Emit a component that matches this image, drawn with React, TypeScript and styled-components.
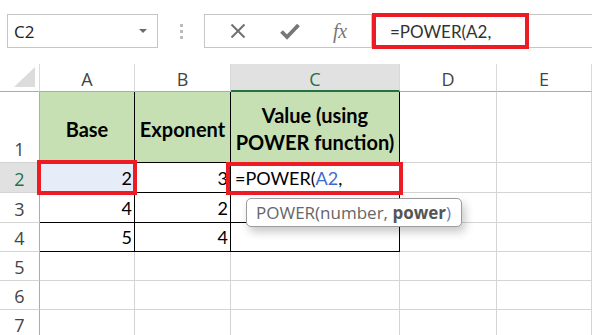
import React from 'react'
import styled, { createGlobalStyle } from 'styled-components'

const GlobalStyle = createGlobalStyle`
  html, body {
    margin: 0;
    padding: 0;
    background: #ffffff;
  }
  body {
    font-family: 'Open Sans', 'Noto Sans', sans-serif;
  }
`

const Page = styled.div`
  width: 592px;
  height: 335px;
  overflow: hidden;
  background: #ffffff;
`

const TopBar = styled.div`
  display: flex;
  align-items: stretch;
  height: 34px;
  padding: 14px 0 16px 7px;
`

const NameBox = styled.div`
  width: 151px;
  box-sizing: border-box;
  border: 1px solid #c6c6c6;
  display: flex;
  align-items: center;
  justify-content: space-between;
  padding: 0 10px 0 6px;
  font-size: 17px;
  color: #222;
`

const DropArrow = styled.span`
  width: 0;
  height: 0;
  border-left: 4px solid transparent;
  border-right: 4px solid transparent;
  border-top: 4px solid #6a6a6a;
`

const Grip = styled.div`
  width: 46px;
  display: flex;
  flex-direction: column;
  align-items: center;
  justify-content: center;
  gap: 3px;

  span {
    width: 3px;
    height: 3px;
    background: #bcbcbc;
  }
`

const FxBox = styled.div`
  width: 168px;
  box-sizing: border-box;
  border: 1px solid #c6c6c6;
  display: flex;
  align-items: center;
  justify-content: space-around;
  padding: 0 8px;
  color: #6e6e6e;
`

const FxLabel = styled.span`
  font-family: 'Liberation Serif', 'DejaVu Serif', serif;
  font-style: italic;
  font-size: 20px;
  color: #777;
  letter-spacing: -0.5px;
`

const FormulaInput = styled.div`
  flex: 1;
  position: relative;
  box-sizing: border-box;
  border-top: 1px solid #c6c6c6;
  border-bottom: 1px solid #c6c6c6;
  display: flex;
  align-items: center;
  padding-left: 18px;
  font-family: Lato, 'Open Sans', sans-serif;
  font-size: 17px;
  color: #333;
`

const RedFrame = styled.div<{ $t: number; $r: number; $b: number; $l: number }>`
  position: absolute;
  top: ${(p) => p.$t}px;
  right: ${(p) => p.$r}px;
  bottom: ${(p) => p.$b}px;
  left: ${(p) => p.$l}px;
  border: 4px solid #ed1c24;
  pointer-events: none;
  z-index: 3;
`

const Sheet = styled.div`
  display: grid;
  grid-template-columns: 40px 95px 96px 169px 97px 1fr;
  grid-template-rows: 28px 71px 30px 30px 29px 29px 29px 29px;
`

const Corner = styled.div`
  position: relative;
  box-sizing: border-box;
  border-right: 1px solid #dadada;
  border-bottom: 1px solid #ababab;

  &::after {
    content: '';
    position: absolute;
    right: 4px;
    bottom: 4px;
    width: 21px;
    height: 20px;
    background: #dcdcdc;
    clip-path: polygon(100% 0, 100% 100%, 0 100%);
  }
`

const ColHead = styled.div<{ $active?: boolean }>`
  box-sizing: border-box;
  display: flex;
  align-items: center;
  justify-content: center;
  padding-top: 3px;
  font-size: 18px;
  color: ${(p) => (p.$active ? '#217346' : '#444')};
  background: ${(p) => (p.$active ? '#e1e1e1' : '#ffffff')};
  border-right: 1px solid #d9d9d9;
  border-bottom: ${(p) => (p.$active ? '2px solid #217346' : '1px solid #ababab')};
`

const RowHead = styled.div<{ $active?: boolean }>`
  box-sizing: border-box;
  display: flex;
  align-items: flex-end;
  justify-content: center;
  padding-bottom: 1px;
  font-size: 18px;
  line-height: 24px;
  color: ${(p) => (p.$active ? '#217346' : '#444')};
  background: ${(p) => (p.$active ? '#e1e1e1' : '#ffffff')};
  border-right: 1px solid #ababab;
  border-bottom: 1px solid #d4d4d4;
`

const Cell = styled.div<{
  $fill?: string
  $boxed?: boolean
  $align?: 'left' | 'right' | 'center'
  $header?: boolean
  $tint?: boolean
}>`
  position: relative;
  box-sizing: border-box;
  display: flex;
  align-items: ${(p) => (p.$header ? 'center' : 'flex-end')};
  justify-content: ${(p) =>
    p.$align === 'right' ? 'flex-end' : p.$align === 'center' ? 'center' : 'flex-start'};
  text-align: center;
  padding: ${(p) => (p.$header ? '4px 2px 0' : '0 2px 1px 4px')};
  font-family: Lato, 'Open Sans', sans-serif;
  font-size: ${(p) => (p.$header ? '20px' : '18px')};
  font-weight: ${(p) => (p.$header ? 700 : 400)};
  line-height: ${(p) => (p.$header ? '27px' : '26px')};
  color: #000;
  background: ${(p) => (p.$tint ? '#e6edf8' : p.$fill ?? '#ffffff')};
  box-shadow: ${(p) => (p.$tint ? 'inset 0 1px 0 #4f7fd0' : 'none')};
  border-right: 1px solid ${(p) => (p.$boxed ? '#000' : '#d4d4d4')};
  border-bottom: 1px solid ${(p) => (p.$boxed ? '#000' : '#d4d4d4')};
`

const Ref = styled.span`
  color: #3d6dcc;
`

const Tip = styled.div`
  position: absolute;
  left: 15px;
  top: 35px;
  width: 216px;
  height: 29px;
  box-sizing: border-box;
  z-index: 4;
  background: #ffffff;
  border: 1.5px solid #9c9c9c;
  border-radius: 5px;
  box-shadow: 3px 5px 10px rgba(0, 0, 0, 0.22);
  display: flex;
  align-items: center;
  padding-left: 9px;
  font-family: 'Open Sans', 'Noto Sans', sans-serif;
  font-size: 17px;
  color: #666;
  white-space: nowrap;

  b {
    font-weight: 700;
    color: #555;
  }
`

const CloseParen = styled.span`
  color: #6a80c4;
`

const CloseIcon = () => (
  <svg width="18" height="18" viewBox="0 0 18 18">
    <path d="M2.5 2.5 L15.5 15.5 M15.5 2.5 L2.5 15.5" stroke="#707070" strokeWidth="2" />
  </svg>
)

const CheckIcon = () => (
  <svg width="20" height="18" viewBox="0 0 20 18">
    <path d="M1.5 9.5 L7 15 L18.5 3" fill="none" stroke="#777" strokeWidth="3.8" strokeLinejoin="miter" />
  </svg>
)

const columns = ['A', 'B', 'C', 'D', 'E']

export default function App() {
  const dataRows: { a: string; b: string }[] = [
    { a: '4', b: '2' },
    { a: '5', b: '4' },
  ]

  return (
    <Page>
      <GlobalStyle />
      <TopBar>
        <NameBox>
          <span>C2</span>
          <DropArrow />
        </NameBox>
        <Grip>
          <span />
          <span />
          <span />
        </Grip>
        <FxBox>
          <CloseIcon />
          <CheckIcon />
          <FxLabel>fx</FxLabel>
        </FxBox>
        <FormulaInput>
          =POWER(A2,
          <RedFrame $t={-2} $r={63} $b={-2} $l={0} />
        </FormulaInput>
      </TopBar>

      <Sheet>
        <Corner />
        {columns.map((c) => (
          <ColHead key={c} $active={c === 'C'}>
            {c}
          </ColHead>
        ))}

        <RowHead>1</RowHead>
        <Cell $header $boxed $align="center" $fill="#c6e0b4">
          Base
        </Cell>
        <Cell $header $boxed $align="center" $fill="#c6e0b4">
          Exponent
        </Cell>
        <Cell $header $boxed $align="center" $fill="#c6e0b4">
          Value (using
          <br />
          POWER function)
        </Cell>
        <Cell />
        <Cell />

        <RowHead $active>2</RowHead>
        <Cell $boxed $tint $align="right">
          2
          <RedFrame $t={-3} $r={-3} $b={-3} $l={-3} />
        </Cell>
        <Cell $boxed $align="right">
          3
        </Cell>
        <Cell $boxed>
          =POWER(<Ref>A2</Ref>,
          <RedFrame $t={-1} $r={-4} $b={-3} $l={-5} />
          <Tip>
            POWER(number,&nbsp;<b>power</b>
            <CloseParen>)</CloseParen>
          </Tip>
        </Cell>
        <Cell />
        <Cell />

        {dataRows.map((r, i) => (
          <React.Fragment key={i}>
            <RowHead>{i + 3}</RowHead>
            <Cell $boxed $align="right">
              {r.a}
            </Cell>
            <Cell $boxed $align="right">
              {r.b}
            </Cell>
            <Cell $boxed />
            <Cell />
            <Cell />
          </React.Fragment>
        ))}

        {[5, 6, 7].map((n) => (
          <React.Fragment key={n}>
            <RowHead>{n}</RowHead>
            <Cell />
            <Cell />
            <Cell />
            <Cell />
            <Cell />
          </React.Fragment>
        ))}
      </Sheet>
    </Page>
  )
}
